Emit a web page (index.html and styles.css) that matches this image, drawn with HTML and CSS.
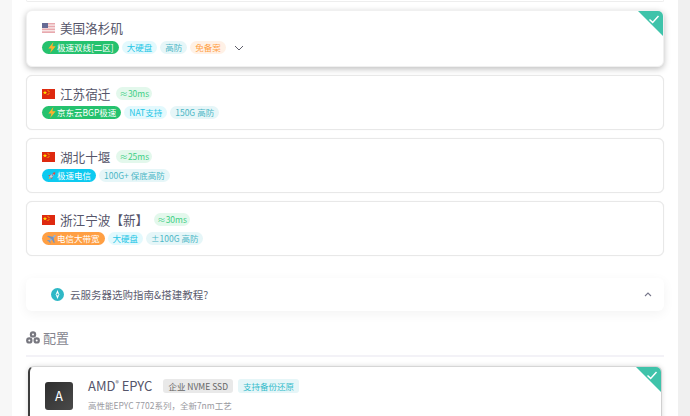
FILE: index.html
```html
<!DOCTYPE html>
<html lang="zh-CN">
<head>
<meta charset="utf-8">
<title>配置</title>
<link rel="stylesheet" href="styles.css">
</head>
<body>
<svg class="defs" width="0" height="0" aria-hidden="true">
  <defs>
    <symbol id="cn" viewBox="0 0 13 10">
      <rect width="13" height="10" fill="#de2910"/>
      <polygon points="3,1.4 3.6,3 5.2,3 3.9,4 4.4,5.6 3,4.6 1.6,5.6 2.1,4 0.8,3 2.4,3" fill="#ffde00"/>
      <circle cx="6" cy="1.2" r=".5" fill="#ffde00"/>
      <circle cx="7" cy="2.6" r=".5" fill="#ffde00"/>
      <circle cx="7" cy="4.2" r=".5" fill="#ffde00"/>
      <circle cx="6" cy="5.6" r=".5" fill="#ffde00"/>
    </symbol>
    <symbol id="bolt" viewBox="0 0 10 12">
      <polygon points="6.5,0 1,7 4.4,7 3,12 9,4.6 5.4,4.6" fill="#ffb02e"/>
    </symbol>
    <symbol id="check" viewBox="0 0 12 10">
      <path d="M1 5 L4.5 8.2 L11 1.2" fill="none" stroke="#fff" stroke-width="1.6"/>
    </symbol>
  </defs>
</svg>
<main class="page">
  <div class="prev"></div>
  <section class="plans">
    <article class="card card-active">
      <div class="head">
        <svg class="flag" viewBox="0 0 13 10"><rect width="13" height="10" fill="#e8a9ae"/><rect y="1.4" width="13" height="1.4" fill="#f7e6e6"/><rect y="4.2" width="13" height="1.4" fill="#f7e6e6"/><rect y="7" width="13" height="1.4" fill="#f7e6e6"/><rect width="6" height="5" fill="#666a94"/></svg>
        <h3 class="name">美国洛杉矶</h3>
      </div>
      <div class="tags">
        <span class="tag tag-green"><svg class="ico"><use href="#bolt"/></svg>极速双线[二区]</span>
        <span class="tag tag-cyan">大硬盘</span>
        <span class="tag tag-teal">高防</span>
        <span class="tag tag-orange">免备案</span>
        <svg class="chev" viewBox="0 0 10 6"><path d="M1 1 L5 5 L9 1" fill="none" stroke="#5f5f6b" stroke-width="1"/></svg>
      </div>
      <div class="corner"><svg class="corner-check"><use href="#check"/></svg></div>
    </article>
    <article class="card">
      <div class="head">
        <svg class="flag"><use href="#cn"/></svg>
        <h3 class="name">江苏宿迁</h3>
        <span class="ping">≈30ms</span>
      </div>
      <div class="tags">
        <span class="tag tag-green"><svg class="ico"><use href="#bolt"/></svg>京东云BGP极速</span>
        <span class="tag tag-cyan">NAT支持</span>
        <span class="tag tag-teal">150G 高防</span>
      </div>
    </article>
    <article class="card">
      <div class="head">
        <svg class="flag"><use href="#cn"/></svg>
        <h3 class="name">湖北十堰</h3>
        <span class="ping">≈25ms</span>
      </div>
      <div class="tags">
        <span class="tag tag-blue"><svg class="ico" viewBox="0 0 12 12"><g transform="rotate(45 6 6)"><path d="M6 3 C7.4 4.2 7.8 6 7.6 9 L4.4 9 C4.2 6 4.6 4.2 6 3Z" fill="#c4ccd8"/><path d="M6 .4 C6.9 1.2 7.4 2.2 7.5 3.6 L4.5 3.6 C4.6 2.2 5.1 1.2 6 .4Z" fill="#e8453c"/><path d="M4.5 6.4 L2.8 9.4 L4.5 9Z M7.5 6.4 L9.2 9.4 L7.5 9Z" fill="#e8453c"/><path d="M4.9 9.2 L7.1 9.2 L6 11.8Z" fill="#ffb02e"/><circle cx="6" cy="5.2" r=".9" fill="#4a7fb5"/></g></svg>极速电信</span>
        <span class="tag tag-teal">100G+ 保底高防</span>
      </div>
    </article>
    <article class="card">
      <div class="head">
        <svg class="flag"><use href="#cn"/></svg>
        <h3 class="name">浙江宁波【新】</h3>
        <span class="ping">≈30ms</span>
      </div>
      <div class="tags">
        <span class="tag tag-amber"><svg class="ico" viewBox="0 0 12 12"><g transform="rotate(45 6 6)"><rect x="5.1" y=".2" width="1.8" height="11.4" rx=".9" fill="#8fb2dc"/><polygon points="6,3.6 11.8,7.2 11.8,8.4 6,6.8 .2,8.4 .2,7.2" fill="#6f93c4"/><polygon points="6,9.4 8.6,11 8.6,11.8 6,11 3.4,11.8 3.4,11" fill="#6f93c4"/></g></svg>电信大带宽</span>
        <span class="tag tag-cyan">大硬盘</span>
        <span class="tag tag-teal">±100G 高防</span>
      </div>
    </article>
  </section>
  <section class="guide">
    <span class="compass"><svg viewBox="0 0 14 14"><circle cx="7" cy="7" r="7" fill="#2fb8c6"/><path d="M7 2.2 L9 7 L7 11.8 L5 7Z" fill="#fff"/><circle cx="7" cy="7" r="1.1" fill="#2fb8c6"/></svg></span>
    <span class="guide-text">云服务器选购指南&amp;搭建教程?</span>
    <svg class="caret" viewBox="0 0 8 5"><path d="M1 4 L4 1 L7 4" fill="none" stroke="#77778a" stroke-width="1.1"/></svg>
  </section>
  <h2 class="section-title">
    <svg class="cubes" viewBox="0 0 14 13"><g fill="#77777f"><circle cx="7" cy="3.4" r="3.2"/><circle cx="3.3" cy="9.4" r="3.2"/><circle cx="10.7" cy="9.4" r="3.2"/></g><g fill="#fff"><circle cx="7" cy="3.4" r="1"/><circle cx="3.3" cy="9.4" r="1"/><circle cx="10.7" cy="9.4" r="1"/></g></svg>
    配置
  </h2>
  <article class="config">
    <div class="logo">A</div>
    <div class="config-body">
      <div class="config-head">
        <h3 class="config-name">AMD<sup class="reg">®</sup> EPYC</h3>
        <span class="badge badge-gray">企业 NVME SSD</span>
        <span class="badge badge-teal">支持备份还原</span>
      </div>
      <p class="config-desc">高性能EPYC 7702系列，全新7nm工艺</p>
    </div>
    <div class="corner"><svg class="corner-check"><use href="#check"/></svg></div>
  </article>
</main>
</body>
</html>
```
FILE: styles.css
```css
* { box-sizing: border-box; }
html, body { margin: 0; height: 416px; overflow: hidden; }
body {
  background: linear-gradient(to right, #f7f7f7 50%, #f0f0f0 50%);
  font-family: "Noto Sans CJK SC", "Noto Sans", sans-serif;
  color: #4f4f63;
}
.defs { position: absolute; }
.page {
  margin: 0 12px;
  height: 416px;
  padding: 0 14px;
  background: #fff;
  overflow: hidden;
}
.prev {
  height: 2px;
  margin-bottom: 8px;
  border: 1px solid #eeeeee;
  border-top: 0;
  border-radius: 0 0 6px 6px;
}
.plans { display: flex; flex-direction: column; gap: 8px; }
.card {
  position: relative;
  height: 55px;
  padding: 8px 15px 0;
  border: 1px solid #e8e8e8;
  border-radius: 6px;
  background: #fff;
  box-shadow: 0 0 1px #e4e4e4;
  overflow: hidden;
}
.card-active {
  height: 57px;
  padding-top: 7px;
  border-color: #f0f0f0;
  box-shadow: 0 2px 6px rgba(0, 0, 0, .26);
}
.card-active .tags { margin-top: 4px; }
.head { display: flex; align-items: center; height: 19px; }
.flag { width: 13px; height: 10px; margin-right: 5px; flex: none; }
.name { margin: 0; font-size: 12.6px; font-weight: 400; line-height: 19px; color: #55556a; }
.ping {
  margin-left: 6px;
  padding: 0 3px;
  height: 13px;
  border-radius: 7px;
  background: #e3f8ec;
  color: #3fcf85;
  font-size: 8.5px;
  line-height: 13px;
}
.tags { display: flex; align-items: center; gap: 3px; margin-top: 3px; }
.tag {
  display: inline-flex;
  align-items: center;
  height: 13px;
  padding: 0 5px;
  border-radius: 7px;
  font-size: 8.5px;
  line-height: 13px;
  white-space: nowrap;
}
.ico { width: 10px; height: 11px; flex: none; }
.tag-green { background: #25c26e; color: #fff; }
.tag-blue { background: #0dcaf0; color: #fff; }
.tag-amber { background: #ff9f43; color: #fff; }
.tag-cyan { background: #e3f9fd; color: #1fc6e6; }
.tag-teal { background: #e6f6f8; color: #4cb7c6; }
.tag-orange { background: #fff1e6; color: #ff9f43; }
.chev { width: 10px; height: 6px; margin-left: 5px; }
.corner {
  position: absolute;
  top: 0;
  right: 0;
  width: 25px;
  height: 25px;
  background: #3fc3aa;
  clip-path: polygon(0 0, 100% 0, 100% 100%);
}
.corner-check { position: absolute; top: 4px; right: 3px; width: 12px; height: 9px; }
.guide {
  display: flex;
  align-items: center;
  height: 33px;
  margin-top: 22px;
  padding: 0 12px 0 25px;
  border-radius: 6px;
  background: #fff;
  box-shadow: 0 3px 12px rgba(0, 0, 0, .05);
}
.compass { width: 13px; height: 13px; margin-right: 6px; flex: none; }
.compass svg { display: block; width: 13px; height: 13px; }
.guide-text { flex: 1; font-size: 10.5px; line-height: 16px; color: #5d5d70; }
.caret { width: 8px; height: 5px; }
.section-title {
  display: flex;
  align-items: center;
  gap: 3px;
  height: 32px;
  margin: 14px 0 0;
  padding-bottom: 5px;
  border-bottom: 2px solid #f3f2f7;
  font-size: 13px;
  font-weight: 400;
  color: #85858f;
}
.cubes { width: 14px; height: 13px; }
.config {
  position: relative;
  display: flex;
  height: 80px;
  margin: 9px 2px 0;
  padding: 15px 0 0 15px;
  border-top: 1px solid #d6d6d6;
  border-right: 1px solid #d0d0d0;
  border-left: 2px solid #3d3d3d;
  border-radius: 6px;
  background: #fff;
  box-shadow: 0 0 5px rgba(0, 0, 0, .15);
  overflow: hidden;
}
.logo {
  width: 28px;
  height: 28px;
  margin-right: 15px;
  border-radius: 3px;
  background: linear-gradient(135deg, #2e2e2e, #4a4a4a);
  color: #fff;
  font-size: 13px;
  line-height: 28px;
  text-align: center;
  flex: none;
}
.config-head { display: flex; align-items: center; gap: 5px; height: 17px; margin-top: -5px; }
.config-name { margin: 0 6px 0 0; font-size: 13px; font-weight: 400; line-height: 17px; color: #55556a; }
.reg { font-size: 7px; line-height: 0; }
.badge {
  height: 14px;
  padding: 0 5px;
  border-radius: 3px;
  font-size: 8.5px;
  line-height: 14px;
  white-space: nowrap;
}
.badge-gray { background: #e9e9e9; color: #666; }
.badge-teal { background: #e6f6f8; color: #37bccb; }
.config-desc { margin: 5px 0 0; font-size: 8.5px; line-height: 12px; color: #9a9a9f; }
```
